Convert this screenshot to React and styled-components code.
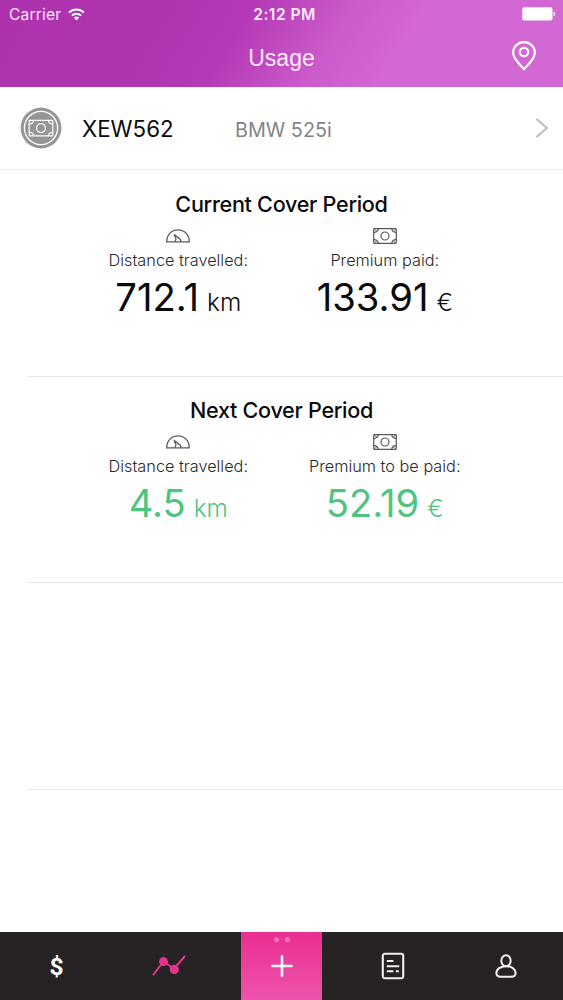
import React from 'react';
import styled, { createGlobalStyle } from 'styled-components';

const COLOR = {
  black: '#0b0b0d',
  text: '#2b282a',
  gray: '#858385',
  line: '#e6e4e6',
  green: '#4fc47f',
  pink: '#e6348c',
  bar: '#272223',
};

const PERIODS = [
  {
    title: 'Current Cover Period',
    color: COLOR.black,
    distance: { label: 'Distance travelled:', value: '712.1', unit: 'km' },
    premium: { label: 'Premium paid:', value: '133.91', unit: '€' },
  },
  {
    title: 'Next Cover Period',
    color: COLOR.green,
    distance: { label: 'Distance travelled:', value: '4.5', unit: 'km' },
    premium: { label: 'Premium to be paid:', value: '52.19', unit: '€' },
  },
];

const WifiIcon = () => (
  <svg width="17" height="13" viewBox="0 0 17 13" fill="none" stroke="#fff" strokeWidth="2">
    <path d="M1 4.6a10.6 10.6 0 0 1 15 0" />
    <path d="M3.9 7.6a6.5 6.5 0 0 1 9.2 0" />
    <path d="M8.5 12.4 5.9 9.8a3.7 3.7 0 0 1 5.2 0z" fill="#fff" stroke="none" />
  </svg>
);

const BatteryIcon = () => (
  <svg width="34" height="14" viewBox="0 0 34 14" fill="#fff">
    <rect x="0.3" y="0.3" width="30.2" height="13.2" rx="2" />
    <path d="M31.6 4.8q1.6.5 1.6 2.2t-1.6 2.2z" />
  </svg>
);

const PinIcon = () => (
  <svg width="26" height="30" viewBox="0 0 26 30" fill="none" stroke="#fff" strokeWidth="2.2" strokeLinejoin="round">
    <path d="M13 28.4C10.6 24.4 2.1 19 2.1 11.6a10.9 10.4 0 0 1 21.8 0C23.9 19 15.4 24.4 13 28.4z" />
    <circle cx="13" cy="11" r="4.2" />
  </svg>
);

const NoteIcon = () => (
  <svg width="24" height="16" viewBox="0 0 24 16" fill="none" stroke="#5b585a" strokeWidth="1.2">
    <rect x="0.7" y="0.7" width="22.6" height="14.6" rx="0.8" />
    <circle cx="12" cy="8" r="4" />
    <path d="M5.2.8Q5 4 .8 4.6M18.8.8Q19 4 23.2 4.6M5.2 15.2Q5 12 .8 11.4M18.8 15.2Q19 12 23.2 11.4" />
    <path d="M1 1l3 2.4M23 1l-3 2.4M1 15l3-2.4M23 15l-3-2.4" strokeWidth="0.8" />
  </svg>
);

const GaugeIcon = () => (
  <svg width="24" height="14" viewBox="0 0 24 14" fill="none" stroke="#5b585a" strokeWidth="1.3" strokeLinejoin="round">
    <path d="M.7 12.9C.7 5.6 5.6.8 12 .8s11.3 4.8 11.3 12.1z" />
    <path d="M8 5.2l2.2 4.9M8.2 5.4l4.6 3.5M9.2 12.8a2.9 2.9 0 0 1 1-2.7M12 8.8c1.9.4 2.9 1.8 3 4" />
  </svg>
);

const CoverBadge = () => (
  <svg width="42" height="42" viewBox="0 0 42 42" fill="none" stroke="#fff">
    <circle cx="21" cy="21" r="20.4" fill="#969496" stroke="none" />
    <circle cx="21" cy="21" r="16.6" strokeWidth="1.3" />
    <g transform="translate(8.5 12.7)" strokeWidth="1.2">
      <rect x="0.7" y="0.7" width="23.6" height="15.4" rx="0.6" />
      <circle cx="12.5" cy="8.4" r="4.4" />
      <path d="M5 .8Q4.8 4 .8 4.4M20 .8Q20.2 4 24.2 4.4M5 16Q4.8 12.8 .8 12.4M20 16Q20.2 12.8 24.2 12.4" />
    </g>
  </svg>
);

const ChevronIcon = () => (
  <svg width="14" height="20" viewBox="0 0 14 20" fill="none" stroke="#bdbbbd" strokeWidth="2">
    <path d="M1.5 1l10.4 9L1.5 19" />
  </svg>
);

const ChartIcon = () => (
  <svg width="34" height="22" viewBox="0 0 34 22" fill={COLOR.pink} stroke={COLOR.pink} strokeWidth="2" strokeLinecap="round">
    <path d="M1.5 19.5 11.5 6.5 22 14 32.5 1.5" fill="none" />
    <circle cx="11.5" cy="6.6" r="3.5" />
    <circle cx="22.3" cy="14.4" r="3.6" />
  </svg>
);

const PlusIcon = () => (
  <svg width="22" height="22" viewBox="0 0 22 22" stroke="#fff" strokeWidth="2.6" strokeLinecap="round">
    <path d="M11 1.3v19.4M1.3 11h19.4" />
  </svg>
);

const DocumentIcon = () => (
  <svg width="24" height="28" viewBox="0 0 24 28" fill="none" stroke="#f4eff1" strokeWidth="2.1">
    <rect x="1.8" y="1.8" width="20.4" height="24.4" rx="2" />
    <path d="M5.8 9h6.6M5.8 14.2h12.4M5.8 19.2h6.6M14.8 19.2h3" />
  </svg>
);

const ProfileIcon = () => (
  <svg width="22" height="24" viewBox="0 0 22 24" fill="none" stroke="#f4eff1" strokeWidth="2">
    <ellipse cx="11" cy="6.7" rx="4.7" ry="5.5" />
    <path d="M11 12.2c5.4 0 9.6 3 9.6 6.8 0 2.500-1.500 3.800-4.200 3.800H5.600c-2.700 0-4.200-1.300-4.200-3.800 0-3.800 4.200-6.800 9.600-6.800z" />
  </svg>
);

const Metric = ({ icon, label, value, unit, color }) => (
  <MetricColumn>
    <MetricIcon>{icon}</MetricIcon>
    <MetricLabel>{label}</MetricLabel>
    <MetricValue $color={color}>
      {value}
      <MetricUnit>{unit}</MetricUnit>
    </MetricValue>
  </MetricColumn>
);

const App = () => {
  return (
    <>
      <GlobalStyle />
      <Screen>
        <Header>
          <StatusBar>
            <Carrier>
              Carrier
              <WifiIcon />
            </Carrier>
            <Time>2:12 PM</Time>
            <Battery>
              <BatteryIcon />
            </Battery>
          </StatusBar>
          <NavBar>
            <NavTitle>Usage</NavTitle>
            <PinButton aria-label="Location">
              <PinIcon />
            </PinButton>
          </NavBar>
        </Header>
        <VehicleRow>
          <CoverBadge />
          <Plate>XEW562</Plate>
          <Model>BMW 525i</Model>
          <ChevronIcon />
        </VehicleRow>
        <Main>
          {PERIODS.map(({ title, color, distance, premium }) => (
            <Period key={title}>
              <PeriodTitle>{title}</PeriodTitle>
              <Metrics>
                <Metric icon={<GaugeIcon />} color={color} {...distance} />
                <Metric icon={<NoteIcon />} color={color} {...premium} />
              </Metrics>
            </Period>
          ))}
          <Period />
        </Main>
        <TabBar>
          <Tab $width={113}>
            <Dollar>$</Dollar>
          </Tab>
          <Tab $width={112}>
            <ChartIcon />
          </Tab>
          <AddTab $width={81}>
            <Dots>
              <Dot />
              <Dot />
            </Dots>
            <PlusIcon />
          </AddTab>
          <Tab $width={142}>
            <DocumentIcon />
          </Tab>
          <Tab $width={84}>
            <ProfileIcon />
          </Tab>
        </TabBar>
      </Screen>
    </>
  );
};

export default App;

const GlobalStyle = createGlobalStyle`
  * {
    box-sizing: border-box;
  }

  body {
    margin: 0;
    font-family: Inter, 'Liberation Sans', sans-serif;
  }

  h1, h2, p {
    margin: 0;
  }

  button {
    padding: 0;
    border: 0;
    background: none;
  }

  svg {
    display: block;
    flex-shrink: 0;
  }
`;

const Screen = styled.div`
  display: flex;
  flex-direction: column;
  width: 563px;
  height: 1000px;
  overflow: hidden;
  background: #fff;
`;

const Header = styled.header`
  height: 87px;
  color: #fbeafb;
  background: linear-gradient(122deg, #ae31ad 0%, #b033af 28%, #b63ab8 42%, #c04bbf 50%, #cb5acb 58%, #d367d3 70%, #d367d3 100%);
`;

const StatusBar = styled.div`
  display: grid;
  grid-template-columns: 1fr auto 1fr;
  align-items: center;
  height: 29px;
  padding: 0 7px 0 9px;
  font-size: 16px;
`;

const Carrier = styled.span`
  display: flex;
  align-items: center;
  gap: 7px;
  margin-top: -1px;
  font-size: 15.5px;
  letter-spacing: 0.2px;
`;

const Time = styled.span`
  padding-left: 4px;
  font-weight: 600;
  font-size: 15.5px;
  letter-spacing: 0.5px;
`;

const Battery = styled.span`
  justify-self: end;
  margin-top: -1px;
`;

const NavBar = styled.div`
  display: grid;
  grid-template-columns: 1fr auto 1fr;
  align-items: center;
  height: 58px;
  padding-right: 26px;
  padding-left: 26px;
`;

const NavTitle = styled.h1`
  grid-column: 2;
  font: 400 23px/30px 'Liberation Sans', Arial, sans-serif;
`;

const PinButton = styled.button`
  justify-self: end;
  margin-top: -5px;
`;

const VehicleRow = styled.section`
  display: grid;
  grid-template-columns: 42px 133px 1fr 14px;
  column-gap: 20px;
  align-items: center;
  height: 83px;
  padding: 0 14px 0 20px;
  border-bottom: 1px solid #f1ebef;
`;

const Plate = styled.span`
  color: ${COLOR.black};
  font-size: 22.3px;
`;

const Model = styled.span`
  padding-top: 3px;
  color: ${COLOR.gray};
  font-size: 19.8px;
`;

const Main = styled.main`
  flex: 1;
  padding-top: 0.7px;
  padding-left: 28px;
`;

const Period = styled.section`
  height: 206.3px;
  padding-right: 28px;
  border-bottom: 1px solid ${COLOR.line};
  text-align: center;
`;

const PeriodTitle = styled.h2`
  padding-top: 19px;
  color: ${COLOR.black};
  font-weight: 500;
  font-size: 21.6px;
  line-height: 28px;
  letter-spacing: -0.3px;
`;

const Metrics = styled.div`
  display: flex;
  justify-content: center;
`;

const MetricColumn = styled.div`
  display: flex;
  flex-direction: column;
  align-items: center;
  width: 206.5px;
`;

const MetricIcon = styled.div`
  display: flex;
  align-items: center;
  height: 36px;
  padding-top: 1px;
`;

const MetricLabel = styled.p`
  margin-top: -4px;
  color: ${COLOR.text};
  font-weight: 300;
  font-size: 16.3px;
  line-height: 20px;
`;

const MetricValue = styled.p`
  display: flex;
  align-items: baseline;
  gap: 8px;
  margin-top: 3px;
  color: ${({ $color }) => $color};
  font-size: 38.2px;
  line-height: 48px;
`;

const MetricUnit = styled.span`
  font-weight: 300;
  font-size: 24.4px;
`;

const TabBar = styled.nav`
  display: flex;
  justify-content: space-between;
  height: 68px;
  padding-right: 15px;
  background: ${COLOR.bar};
`;

const Tab = styled.button`
  display: flex;
  align-items: center;
  justify-content: center;
  width: ${({ $width }) => $width}px;
`;

const Dollar = styled.span`
  padding-top: 1px;
  color: #fff;
  font: 700 24.5px/32px Roboto, sans-serif;
`;

const AddTab = styled(Tab)`
  position: relative;
  margin-left: 16px;
  background: linear-gradient(#ea2f92, #ee52ac);
`;

const Dots = styled.span`
  position: absolute;
  top: 5px;
  display: flex;
  gap: 6px;
`;

const Dot = styled.span`
  width: 5px;
  height: 5px;
  border-radius: 50%;
  background: #f873bd;
`;
